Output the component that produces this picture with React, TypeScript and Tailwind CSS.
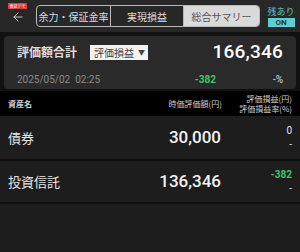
import { ArrowLeft } from 'lucide-react';

const jp = "font-['Noto_Sans_CJK_JP','Noto_Sans',sans-serif]";
const num = "font-['Roboto','Noto_Sans_CJK_JP',sans-serif]";

const rows = [
  { name: '債券', value: '30,000', pl: '0', plGreen: false, rate: '-' },
  { name: '投資信託', value: '136,346', pl: '-382', plGreen: true, rate: '-' },
];

export default function App() {
  return (
    <div className={`w-[300px] h-[252px] bg-[#1d1d1d] overflow-hidden ${jp}`}>
      {/* Top bar */}
      <div className="relative h-[32px] bg-[#272727] flex items-center">
        <span className="absolute left-[8px] top-[3px] h-[6px] w-[19px] bg-[#e0393e] text-[4px] leading-[6px] text-white text-center overflow-hidden">
          東証デモ
        </span>
        <div className="w-[36px] flex justify-center pt-[1px]">
          <ArrowLeft size={14} color="#cfcfcf" strokeWidth={1.6} />
        </div>
        <div className="flex h-[22px] w-[224px] border border-[#b8b8b8] rounded-[4px] overflow-hidden text-[10px] whitespace-nowrap">
          <div className="w-[74px] flex items-center justify-center text-[#dcdcdc] border-r border-[#b8b8b8]">
            余力・保証金率
          </div>
          <div className="w-[73px] flex items-center justify-center text-[#dcdcdc] border-r border-[#b8b8b8]">
            実現損益
          </div>
          <div className="flex-1 flex items-center justify-center bg-[#dadada] text-[#555]">
            総合サマリー
          </div>
        </div>
        <div className="flex-1 flex flex-col items-center pl-[2px] gap-[1px]">
          <span className="text-[9px] leading-[11px] text-[#5cc4c8]">残あり</span>
          <span className={`w-[27px] h-[9px] bg-[#5ccfd3] text-[#1d3b3c] text-[8px] leading-[9px] font-bold text-center ${num}`}>
            ON
          </span>
        </div>
      </div>

      {/* Summary card */}
      <div className="bg-[#111] pt-[4px] pb-[2px]">
        <div className="mx-[4px] h-[53px] bg-[#2a2a2a] rounded-[4px] px-[13px] pt-[6px]">
          <div className="flex items-center h-[20px]">
            <span className="text-[12px] font-bold text-[#dcdcdc]">評価額合計</span>
            <span className="ml-[13px] h-[15px] bg-[#f2f2f2] text-[#444] text-[10px] leading-[15px] pl-[4px] pr-[3px] flex items-center gap-[4px]">
              評価損益
              <span className="text-[7px]">▼</span>
            </span>
            <span className={`ml-auto text-[19px] font-medium text-white tracking-[0.2px] ${num}`}>166,346</span>
          </div>
          <div className="flex items-center mt-[10px] text-[10px]">
            <span className={`text-[#8a8a8a] ${num}`}>2025/05/02&nbsp;&nbsp;02:25</span>
            <span className={`ml-auto w-[90px] text-right text-[#3ec46c] font-bold ${num}`}>-382</span>
            <span className={`w-[67px] text-right text-[#dcdcdc] ${num}`}>-%</span>
          </div>
        </div>
      </div>

      {/* Header */}
      <div className="h-[25px] bg-black flex items-center px-[8px] text-[8px] text-[#cfcfcf] whitespace-nowrap">
        <span className="font-bold">資産名</span>
        <span className="ml-auto">時価評価額(円)</span>
        <div className="w-[70px] flex flex-col items-end leading-[10px]">
          <span>評価損益(円)</span>
          <span>評価損益率(%)</span>
        </div>
      </div>

      {/* Rows */}
      {rows.map((r, i) => (
        <div
          key={i}
          className={`flex items-center px-[8px] border-b-2 border-[#0f0f0f] ${i === 0 ? 'h-[44px] mt-[1px]' : 'h-[43px]'}`}
        >
          <span className="text-[13px] text-[#e6e6e6]">{r.name}</span>
          <span className={`ml-auto text-[17px] font-medium text-[#f2f2f2] ${num}`}>{r.value}</span>
          <div className={`w-[71px] flex flex-col items-end gap-[2px] text-[10px] leading-[12px] ${num}`}>
            <span className={r.plGreen ? 'text-[#3ec46c] font-bold' : 'text-[#e6e6e6]'}>{r.pl}</span>
            <span className="text-[#e6e6e6]">{r.rate}</span>
          </div>
        </div>
      ))}
    </div>
  );
}
